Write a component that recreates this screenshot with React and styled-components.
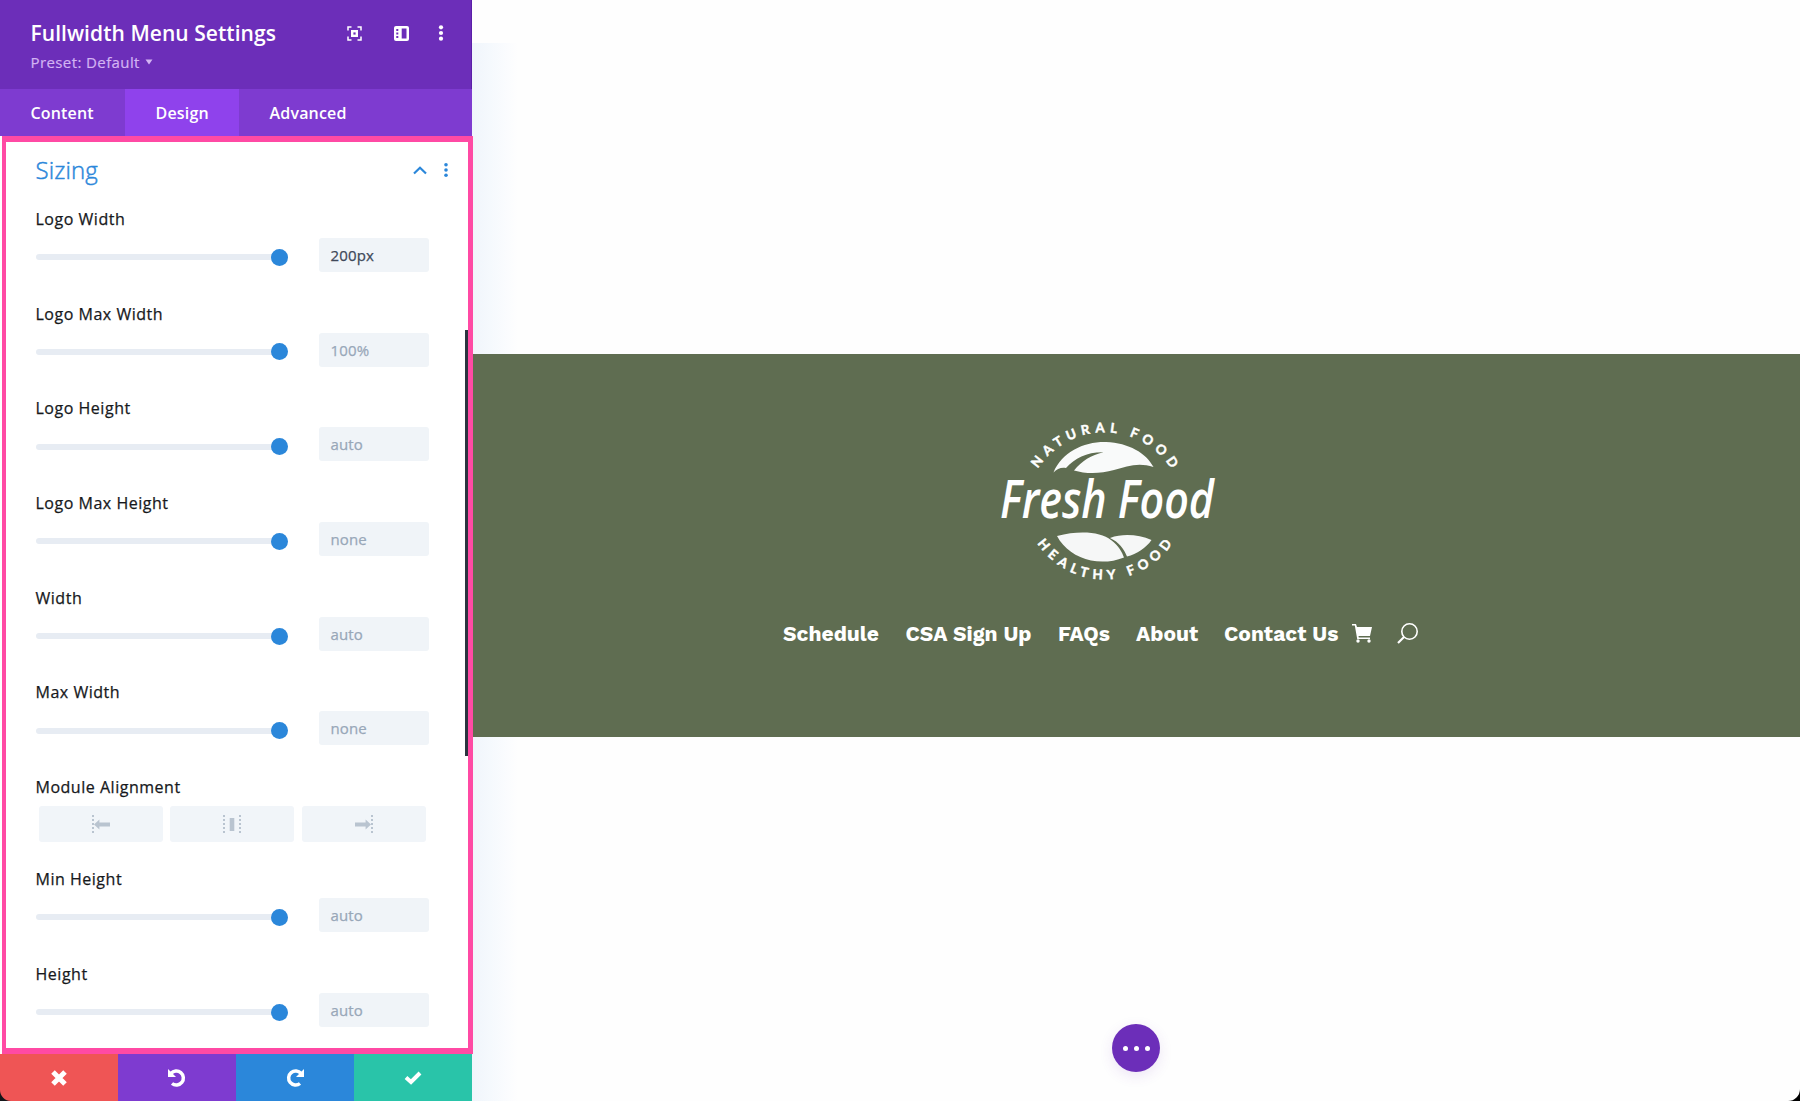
import React from "react";
import styled, { createGlobalStyle } from "styled-components";

const GlobalStyle = createGlobalStyle`
  * {
    box-sizing: border-box;
  }
  body {
    margin: 0;
    background: #fefefe;
    font-family: "Open Sans", sans-serif;
  }
`;

const Page = styled.div`
  display: flex;
  width: 1800px;
  height: 1101px;
  overflow: hidden;
  position: relative;
`;

const Panel = styled.aside`
  width: 472px;
  height: 1101px;
  flex-shrink: 0;
  display: flex;
  flex-direction: column;
  position: relative;
  z-index: 1;
`;

const PanelHeader = styled.header`
  height: 89px;
  padding: 20px 27.5px 0 30.5px;
  display: flex;
  justify-content: space-between;
  background: #6c2eb9;
  border-right: 1px solid #5b1fa8;
`;

const PanelTitle = styled.h1`
  margin: 0;
  font-size: 21px;
  line-height: 26px;
  font-weight: 600;
  letter-spacing: 0.05px;
  color: #fff;
  white-space: nowrap;
`;

const Preset = styled.div`
  display: flex;
  align-items: center;
  gap: 5px;
  margin-top: 6px;
  font-size: 15px;
  line-height: 20px;
  letter-spacing: 0.4px;
  -webkit-text-stroke: 0.2px #d3b4f3;
  color: #d3b4f3;
`;

const HeaderIcons = styled.div`
  display: flex;
  align-items: center;
  height: 26px;

  svg {
    display: block;
  }
  svg:nth-child(2) {
    margin-left: 32px;
  }
  svg:nth-child(3) {
    margin-left: 29px;
  }
`;

const Tabs = styled.nav`
  height: 47px;
  display: flex;
  background: #7e3bd0;
`;

const Tab = styled.div`
  width: ${({ $width }) => $width}px;
  display: flex;
  align-items: center;
  padding: 0 0 0 30.5px;
  font-size: 16px;
  font-weight: 600;
  letter-spacing: 0.18px;
  color: #fff;
  background: ${({ $active }) => ($active ? "#8f42ec" : "transparent")};
`;

const Body = styled.section`
  height: 918px;
  width: 471px;
  margin-left: 2px;
  padding: 13px 0 0 29.5px;
  position: relative;
  background: #fff;
  border: 6px solid #ff4aa4;
  border-left: 4px solid #ff4aa4;
  border-right: 5px solid #ff4aa4;
  overflow: hidden;
`;

const ScrollThumb = styled.div`
  position: absolute;
  right: 0;
  top: 188px;
  width: 3px;
  height: 426px;
  background: #2b3440;
`;

const SectionHead = styled.div`
  display: flex;
  align-items: center;
  justify-content: space-between;
  height: 30px;
  padding-right: 19px;
`;

const SectionTitle = styled.h2`
  margin: 0;
  font-size: 24px;
  line-height: 30px;
  font-weight: 300;
  letter-spacing: 0.1px;
  -webkit-text-stroke: 0.45px #2b87da;
  color: #2b87da;
`;

const SectionIcons = styled.div`
  display: flex;
  align-items: center;
  gap: 16px;
`;

const Fields = styled.div`
  padding-top: 23px;
`;

const Field = styled.div`
  height: ${({ $height }) => $height || 94.7}px;
`;

const Label = styled.div`
  height: 22px;
  line-height: 22px;
  font-size: 16px;
  letter-spacing: 0.52px;
  -webkit-text-stroke: 0.25px #17191c;
  color: #17191c;
`;

const Control = styled.div`
  display: flex;
  align-items: center;
  margin-top: 8px;
  height: 34px;
`;

const Track = styled.div`
  width: 252px;
  height: 6px;
  margin-top: 4.6px;
  border-radius: 3px;
  background: #e7ecf3;
  display: flex;
  align-items: center;
  justify-content: flex-end;
`;

const Knob = styled.div`
  width: 17px;
  height: 17px;
  flex-shrink: 0;
  border-radius: 50%;
  background: #2b87da;
`;

const ValueBox = styled.div`
  width: 110px;
  height: 34px;
  margin-left: 31.5px;
  padding-left: 11.5px;
  border-radius: 3px;
  background: #f0f4f8;
  font-size: 15px;
  line-height: 34px;
  letter-spacing: 0.15px;
  -webkit-text-stroke: 0.25px ${({ $filled }) => ($filled ? "#40495a" : "#98a7b8")};
  color: ${({ $filled }) => ($filled ? "#40495a" : "#98a7b8")};
`;

const AlignGroup = styled.div`
  display: flex;
  gap: 7.5px;
  margin: 7.5px 0 0 3px;
`;

const AlignButton = styled.div`
  width: 124px;
  height: 36px;
  display: flex;
  align-items: center;
  justify-content: center;
  border-radius: 3px;
  background: #f1f5f9;
`;

const Footer = styled.footer`
  height: 47px;
  display: flex;
`;

const FooterButton = styled.div`
  width: ${({ $width }) => $width || 118}px;
  display: flex;
  align-items: center;
  justify-content: center;
  background: ${({ $color }) => $color};
`;

const Preview = styled.main`
  flex: 1;
  padding-top: 354px;
  position: relative;
  background: #fefefe;
`;

const Shade = styled.div`
  position: absolute;
  top: 43px;
  left: 0;
  width: 46px;
  height: 1058px;
  background: linear-gradient(90deg, #f0f5fb 0, #f5f9fd 18px, #fbfcfe 36px, #fefefe 46px);
`;

const Hero = styled.div`
  position: relative;
  height: 383px;
  margin-left: 1px;
  display: flex;
  flex-direction: column;
  background: #5f6d51;
`;

const Logo = styled.svg`
  display: block;
  overflow: visible;
  margin: 46px 0 0 507px;
`;

const Menu = styled.ul`
  display: flex;
  align-items: center;
  margin: 20.5px 0 0 310px;
  padding: 0;
  height: 26px;
  list-style: none;
`;

const MenuItem = styled.li`
  width: ${({ $width }) => $width}px;
  font-family: "Work Sans", Inter, sans-serif;
  font-size: 21px;
  line-height: 26px;
  font-weight: 700;
  color: #fff;
  white-space: nowrap;

  svg {
    display: block;
  }
`;

const Fab = styled.div`
  position: absolute;
  left: 640px;
  top: 1024px;
  width: 48px;
  height: 48px;
  display: flex;
  align-items: center;
  justify-content: center;
  gap: 6px;
  border-radius: 50%;
  background: #6c2eb9;
  box-shadow: 0 4px 14px rgba(108, 46, 185, 0.12);
`;

const Dot = styled.span`
  width: 5px;
  height: 5px;
  border-radius: 50%;
  background: #fff;
`;

const Corner = styled.svg`
  position: absolute;
  z-index: 2;
  bottom: 0;
  ${({ $side }) => $side}: 0;
`;

const VerticalDots = ({ color, r = 2, gap = 6 }) => (
  <svg width="6" height="20" viewBox="0 0 6 20" fill={color}>
    <circle cx="3" cy={10 - gap} r={r} />
    <circle cx="3" cy="10" r={r} />
    <circle cx="3" cy={10 + gap} r={r} />
  </svg>
);

const alignments = ["left", "center", "right"];

const AlignIcon = ({ type }) => {
  if (type === "center") {
    return (
      <svg width="20" height="20" viewBox="0 0 20 20" fill="#b9c4d0">
        <path d="M2 1v19M18 1v19" stroke="#b9c4d0" strokeWidth="2" strokeDasharray="2 2" />
        <rect x="7.7" y="4" width="4.6" height="13" />
      </svg>
    );
  }
  return (
    <svg width="20" height="20" viewBox="0 0 20 20" transform={type === "right" ? "scale(-1 1)" : undefined}>
      <path d="M2 1v19" stroke="#b9c4d0" strokeWidth="2" strokeDasharray="2 2" />
      <path d="M3 10.5 8.4 5.5V8.4H19V12.6H8.4V15.5Z" fill="#b9c4d0" />
    </svg>
  );
};

const sliders = [
  { label: "Logo Width", value: "200px", filled: true },
  { label: "Logo Max Width", value: "100%" },
  { label: "Logo Height", value: "auto" },
  { label: "Logo Max Height", value: "none" },
  { label: "Width", value: "auto" },
  { label: "Max Width", value: "none" },
];

const heights = [
  { label: "Min Height", value: "auto" },
  { label: "Height", value: "auto" },
];

// width is the distance to the start of the next item
const menu = [
  { label: "Schedule", width: 122.5 },
  { label: "CSA Sign Up", width: 152.5 },
  { label: "FAQs", width: 78 },
  { label: "About", width: 88 },
  { label: "Contact Us", width: 128 },
];

const SliderField = ({ label, value, filled }) => (
  <Field>
    <Label>{label}</Label>
    <Control>
      <Track>
        <Knob />
      </Track>
      <ValueBox $filled={filled}>{value}</ValueBox>
    </Control>
  </Field>
);

const FreshFoodLogo = () => (
  <Logo width="256" height="200" viewBox="980 400 256 200">
    <defs>
      <path id="top-arc" d="M1025.3 511.5A79.2 79.2 0 0 1 1183.7 511.5" />
      <path id="bottom-arc" d="M1023.7 498.5A81 81 0 0 0 1185.7 498.5" />
    </defs>
    <g
      fill="#fff"
      stroke="#fff"
      strokeWidth="0.45"
      fontFamily="Lato, sans-serif"
      fontWeight="700"
      fontSize="13.3"
      textAnchor="middle"
    >
      <text letterSpacing="5">
        <textPath href="#top-arc" startOffset="51%">
          NATURAL FOOD
        </textPath>
      </text>
      <text letterSpacing="5.2">
        <textPath href="#bottom-arc" startOffset="51%">
          HEALTHY FOOD
        </textPath>
      </text>
    </g>
    <path
      fill="#f9fafa"
      d="M1053.5 472.5C1062 452 1084 441.5 1106 442C1129 443 1146 453 1153.5 467C1139 462 1127 466 1114 470C1100 474 1086 474 1074 470.5C1082 461 1091 455 1103.5 452.3C1087 452 1075 458 1066 468C1061 467 1057 469 1053.5 472.5Z"
    />
    <path
      fill="#f6f7f7"
      d="M1057 536C1080 530 1101 532 1111 540C1119 546 1122 552 1124 557.5C1113 562 1101 562.5 1091 560.5C1076 557 1064 549 1057 536Z"
    />
    <path fill="#f6f7f7" d="M1110 538C1124 533 1139 535 1151.5 540C1146 548 1137 554 1127 556.5C1124 549 1119 542 1110 538Z" />
    <text
      x="1000"
      y="518"
      fill="#fff"
      fontFamily="'Open Sans', sans-serif"
      fontStyle="italic"
      fontWeight="600"
      fontSize="52"
      textLength="214"
      lengthAdjust="spacingAndGlyphs"
    >
      Fresh Food
    </text>
  </Logo>
);

const App = () => {
  return (
    <>
      <GlobalStyle />
      <Page>
        <Panel>
          <PanelHeader>
            <div>
              <PanelTitle>Fullwidth Menu Settings</PanelTitle>
              <Preset>
                Preset: Default
                <svg width="8" height="6" viewBox="0 0 8 6" fill="#d3b4f3">
                  <path d="M0.5 0.5h7L4 5.5z" />
                </svg>
              </Preset>
            </div>
            <HeaderIcons>
              <svg width="15" height="15" viewBox="0 0 15 15" fill="none" stroke="#fff" strokeWidth="1.5">
                <path d="M1 4.5V1h3.5M10.5 1H14v3.5M14 10.5V14h-3.5M4.5 14H1v-3.5" />
                <rect x="5.2" y="5.2" width="4.6" height="4.6" strokeWidth="2.4" />
              </svg>
              <svg width="15" height="15" viewBox="0 0 15 15">
                <rect width="15" height="15" rx="2" fill="#fff" />
                <path d="M7.7 2.5H12.5V12.5H7.7ZM2.3 3h2v2h-2zM2.3 6.5h2v2h-2zM2.3 10h2v2h-2z" fill="#6c2eb9" />
              </svg>
              <VerticalDots color="#fff" r={2.1} gap={5.7} />
            </HeaderIcons>
          </PanelHeader>
          <Tabs>
            <Tab $width={125}>Content</Tab>
            <Tab $width={114} $active>
              Design
            </Tab>
            <Tab $width={233}>Advanced</Tab>
          </Tabs>
          <Body>
            <SectionHead>
              <SectionTitle>Sizing</SectionTitle>
              <SectionIcons>
                <svg width="14" height="9" viewBox="0 0 14 9" fill="none" stroke="#2b87da" strokeWidth="2.2">
                  <path d="M1 7.5 7 1.8 13 7.5" />
                </svg>
                <VerticalDots color="#2b87da" r={1.8} gap={5.3} />
              </SectionIcons>
            </SectionHead>
            <Fields>
              {sliders.map((s) => (
                <SliderField key={s.label} {...s} />
              ))}
              <Field $height={92}>
                <Label>Module Alignment</Label>
                <AlignGroup>
                  {alignments.map((type) => (
                    <AlignButton key={type}>
                      <AlignIcon type={type} />
                    </AlignButton>
                  ))}
                </AlignGroup>
              </Field>
              {heights.map((s) => (
                <SliderField key={s.label} {...s} />
              ))}
            </Fields>
            <ScrollThumb />
          </Body>
          <Footer>
            <FooterButton $color="#ef5555" $width={118.4}>
              <svg width="16" height="16" viewBox="0 0 16 16" stroke="#fff" strokeWidth="5">
                <path d="M2 2 14 14M14 2 2 14" />
              </svg>
            </FooterButton>
            <FooterButton $color="#7e3bd0">
              <svg width="20" height="20" viewBox="0 0 20 20" fill="none" stroke="#fff" strokeWidth="3.5">
                <path d="M4 5.5A7 7 0 1 1 5 15.5" />
                <path d="M1 1V9H9Z" fill="#fff" stroke="none" />
              </svg>
            </FooterButton>
            <FooterButton $color="#2b87da">
              <svg width="20" height="20" viewBox="0 0 20 20" fill="none" stroke="#fff" strokeWidth="3.5">
                <path d="M16 5.5A7 7 0 1 0 15 15.5" />
                <path d="M19 1V9H11Z" fill="#fff" stroke="none" />
              </svg>
            </FooterButton>
            <FooterButton $color="#29c4a9" $width={117.6}>
              <svg width="18" height="14" viewBox="0 0 18 14" fill="none" stroke="#fff" strokeWidth="4">
                <path d="M2 6.5 7 11 16 2" />
              </svg>
            </FooterButton>
          </Footer>
        </Panel>
        <Preview>
          <Shade />
          <Hero>
            <FreshFoodLogo />
            <Menu>
              {menu.map((m) => (
                <MenuItem key={m.label} $width={m.width}>
                  {m.label}
                </MenuItem>
              ))}
              <MenuItem $width={45}>
                <svg width="21" height="19" viewBox="0 0 21 19" fill="#fff">
                  <path d="M0 0H4L5 3H20L18 12H6.5L6.8 13.5H18V15H5.2L2.8 1.5H0Z" />
                  <circle cx="6" cy="17" r="1.7" />
                  <circle cx="17" cy="17" r="1.7" />
                </svg>
              </MenuItem>
              <MenuItem $width={22}>
                <svg width="21" height="21" viewBox="0 0 21 21" fill="none" stroke="#fff" strokeWidth="1.6">
                  <circle cx="12.5" cy="8.5" r="7.7" />
                  <path d="M7 14 1 20" strokeWidth="2.2" />
                </svg>
              </MenuItem>
            </Menu>
          </Hero>
          <Fab>
            <Dot />
            <Dot />
            <Dot />
          </Fab>
        </Preview>
        <Corner $side="left" width="11" height="11" viewBox="0 0 11 11">
          <path d="M0 0A11 11 0 0 0 11 11H0Z" fill="#14161a" />
        </Corner>
        <Corner $side="right" width="12" height="12" viewBox="0 0 12 12">
          <path d="M12 0A12 12 0 0 1 0 12H12Z" fill="#000" />
        </Corner>
      </Page>
    </>
  );
};

export default App;
